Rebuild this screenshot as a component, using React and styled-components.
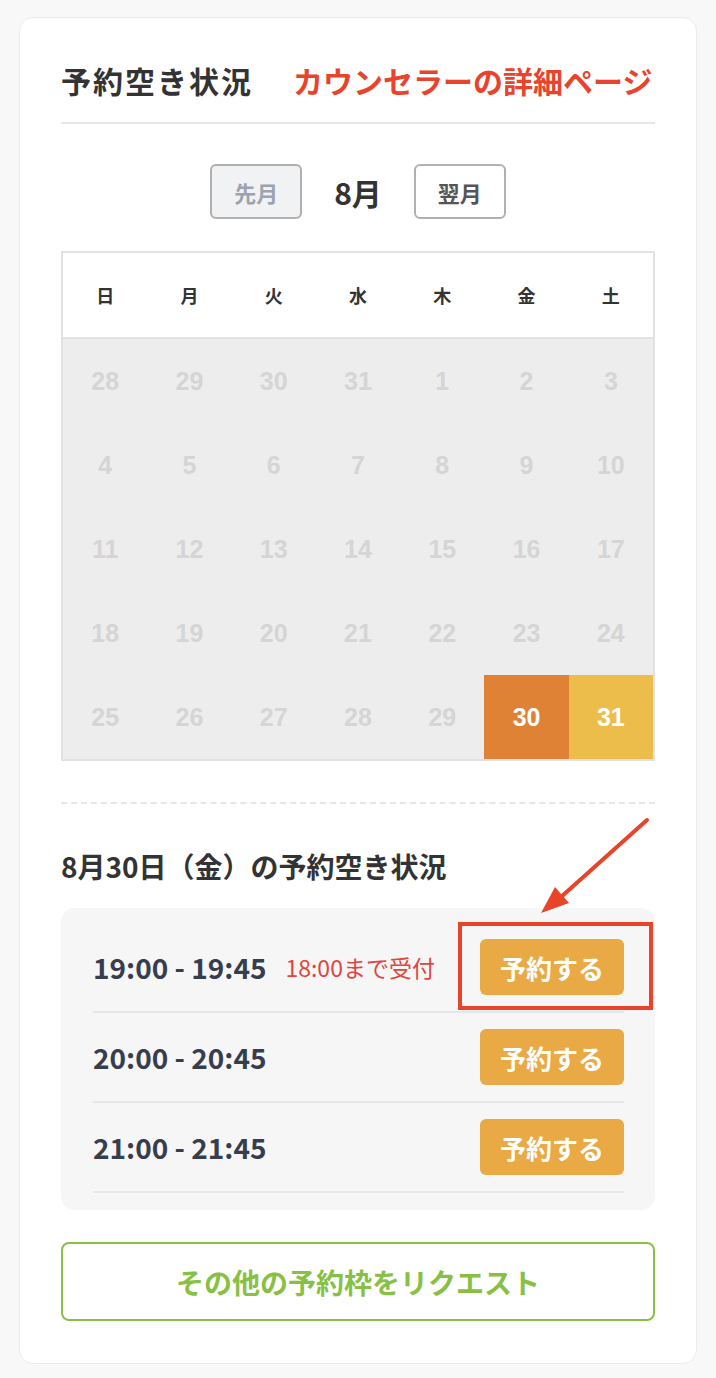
import React from "react";
import styled, { createGlobalStyle } from "styled-components";

const Global = createGlobalStyle`
  html, body { margin: 0; padding: 0; background: #f8f8f8; }
  body { font-family: "Noto Sans CJK JP", "Noto Sans", sans-serif; }
`;

const Page = styled.div`
  padding: 17px 19px 15px 19px;
`;

const Card = styled.div`
  position: relative;
  background: #fff;
  border: 1px solid #ebebeb;
  border-radius: 14px;
  padding: 37px 41px 42px 41px;
`;

const Heading = styled.div`
  display: flex;
  align-items: center;
  gap: 40px;
  height: 50px;
  padding-bottom: 17px;
  border-bottom: 2px solid #e5e7eb;
`;

const Title = styled.h2`
  margin: 0;
  font-size: 30px;
  letter-spacing: 2px;
  font-weight: 700;
  color: #333;
  line-height: 50px;
`;

const DetailLink = styled.a`
  font-size: 30px;
  font-weight: 700;
  color: #e8432b;
  text-decoration: none;
  line-height: 50px;
`;

const MonthNav = styled.div`
  display: flex;
  justify-content: center;
  align-items: center;
  gap: 32px;
  margin-top: 40px;
`;

const NavButton = styled.button`
  width: 92px;
  height: 55px;
  border-radius: 6px;
  border: 2px solid #b0b0b0;
  background: ${(p) => (p.$disabled ? "#f1f2f4" : "#fff")};
  color: ${(p) => (p.$disabled ? "#9ca3af" : "#555")};
  font-family: "Noto Sans CJK JP", sans-serif;
  font-size: 22px;
  font-weight: 700;
  padding: 0;
`;

const MonthLabel = styled.div`
  font-size: 30px;
  font-weight: 700;
  color: #333;
`;

const Calendar = styled.div`
  margin-top: 32px;
  border: 2px solid #e2e2e2;
`;

const WeekRow = styled.div`
  display: grid;
  grid-template-columns: repeat(7, 1fr);
  height: 84px;
  background: #fff;
  border-bottom: 2px solid #e2e2e2;
`;

const DayName = styled.div`
  display: flex;
  align-items: center;
  justify-content: center;
  font-size: 18px;
  font-weight: 700;
  color: #333;
`;

const DateGrid = styled.div`
  display: grid;
  grid-template-columns: repeat(7, 1fr);
  grid-auto-rows: 84px;
  background: #ededed;
`;

const DateCell = styled.div`
  display: flex;
  align-items: center;
  justify-content: center;
  font-family: "Liberation Sans Narrow", "Liberation Sans", Arial, sans-serif;
  font-size: 25px;
  font-weight: 700;
  background: ${(p) =>
    p.$tone === "selected" ? "#e08235" : p.$tone === "open" ? "#edbd4c" : "transparent"};
  color: ${(p) => (p.$tone ? "#fff" : "#d5d5d5")};
`;

const Dashed = styled.hr`
  margin: 41px 0 0 0;
  border: none;
  border-top: 2px dashed #e6e6e6;
`;

const SectionTitle = styled.h3`
  margin: 0;
  margin-top: 40px;
  font-size: 28px;
  font-weight: 700;
  color: #333;
  line-height: 44px;
`;

const SlotBox = styled.div`
  margin-top: 20px;
  background: #f6f6f6;
  border-radius: 14px;
  padding: 15px 31px 17px 32px;
`;

const SlotRow = styled.div`
  display: flex;
  align-items: center;
  height: 88px;
  border-bottom: 2px solid #e5e7eb;
`;

const Time = styled.span`
  font-size: 28px;
  font-weight: 700;
  color: #363d4f;
`;

const Deadline = styled.span`
  margin-left: 19px;
  font-size: 23px;
  color: #e0453f;
`;

const ButtonWrap = styled.div`
  position: relative;
  margin-left: auto;
`;

const ReserveButton = styled.button`
  display: block;
  width: 144px;
  height: 56px;
  border: none;
  border-radius: 6px;
  background: #e9a944;
  color: #fff;
  font-family: "Noto Sans CJK JP", sans-serif;
  font-size: 26px;
  font-weight: 700;
  padding: 0;
`;

const Highlight = styled.div`
  position: absolute;
  left: -22px;
  right: -29px;
  top: -17px;
  bottom: -15px;
  border: 4px solid #e8442a;
  pointer-events: none;
`;

const RequestButton = styled.button`
  display: block;
  width: 100%;
  margin-top: 32px;
  height: 79px;
  border: 2px solid #88c045;
  border-radius: 8px;
  background: #fff;
  color: #88c045;
  font-family: "Noto Sans CJK JP", sans-serif;
  font-size: 28px;
  font-weight: 700;
`;

const Arrow = styled.svg`
  position: absolute;
  left: 491px;
  top: 775px;
  width: 140px;
  height: 120px;
  overflow: visible;
`;

const days = ["日", "月", "火", "水", "木", "金", "土"];
const dates = [
  28, 29, 30, 31, 1, 2, 3,
  4, 5, 6, 7, 8, 9, 10,
  11, 12, 13, 14, 15, 16, 17,
  18, 19, 20, 21, 22, 23, 24,
  25, 26, 27, 28, 29, 30, 31,
];

const slots = [
  { time: "19:00 - 19:45", note: "18:00まで受付", highlight: true },
  { time: "20:00 - 20:45" },
  { time: "21:00 - 21:45" },
];

export default function App() {
  return (
    <Page>
      <Global />
      <Card>
        <Heading>
          <Title>予約空き状況</Title>
          <DetailLink href="#">カウンセラーの詳細ページ</DetailLink>
        </Heading>

        <MonthNav>
          <NavButton $disabled>先月</NavButton>
          <MonthLabel>8月</MonthLabel>
          <NavButton>翌月</NavButton>
        </MonthNav>

        <Calendar>
          <WeekRow>
            {days.map((d) => (
              <DayName key={d}>{d}</DayName>
            ))}
          </WeekRow>
          <DateGrid>
            {dates.map((d, i) => (
              <DateCell
                key={i}
                $tone={i === 33 ? "selected" : i === 34 ? "open" : undefined}
              >
                {d}
              </DateCell>
            ))}
          </DateGrid>
        </Calendar>

        <Dashed />

        <SectionTitle>8月30日（金）の予約空き状況</SectionTitle>

        <SlotBox>
          {slots.map((s) => (
            <SlotRow key={s.time}>
              <Time>{s.time}</Time>
              {s.note && <Deadline>{s.note}</Deadline>}
              <ButtonWrap>
                <ReserveButton>予約する</ReserveButton>
                {s.highlight && <Highlight />}
              </ButtonWrap>
            </SlotRow>
          ))}
        </SlotBox>

        <RequestButton>その他の予約枠をリクエスト</RequestButton>

        <Arrow viewBox="0 0 140 120">
          <line x1="136" y1="27" x2="50" y2="104" stroke="#e8442a" strokeWidth="4" strokeLinecap="round" />
          <polygon points="30,120 44,94 58,110" fill="#e8442a" />
        </Arrow>
      </Card>
    </Page>
  );
}
